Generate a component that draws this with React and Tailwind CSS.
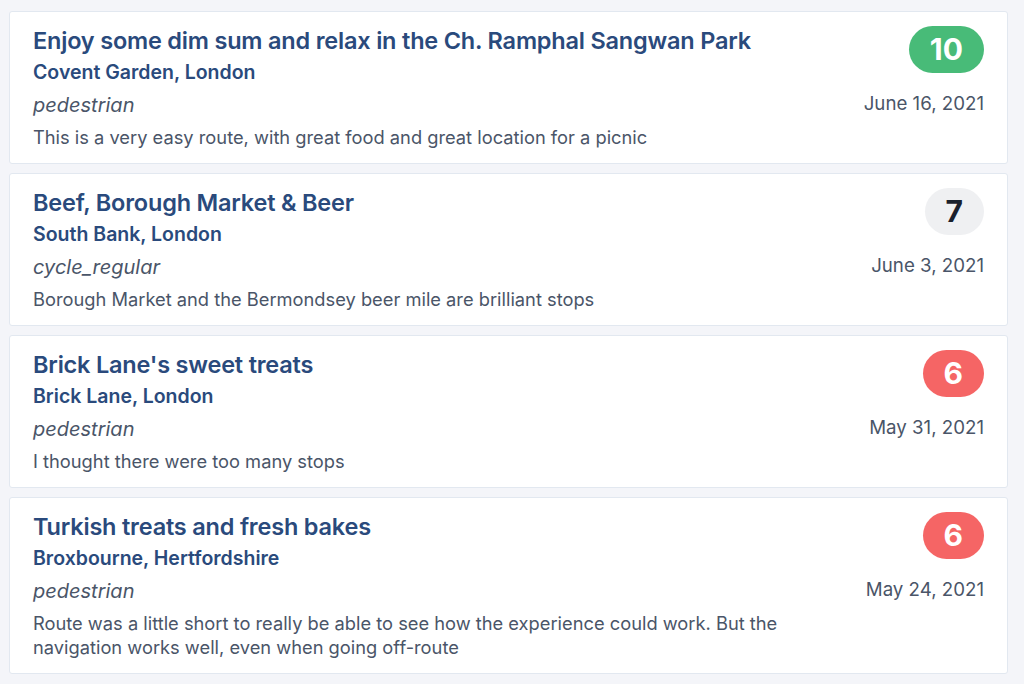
import React from "react";

const items = [
  {
    title: "Enjoy some dim sum and relax in the Ch. Ramphal Sangwan Park",
    place: "Covent Garden, London",
    mode: "pedestrian",
    desc: "This is a very easy route, with great food and great location for a picnic",
    score: 10,
    date: "June 16, 2021",
    badge: "bg-[#48bb78] text-white",
  },
  {
    title: "Beef, Borough Market & Beer",
    place: "South Bank, London",
    mode: "cycle_regular",
    desc: "Borough Market and the Bermondsey beer mile are brilliant stops",
    score: 7,
    date: "June 3, 2021",
    badge: "bg-[#eff0f2] text-[#1a202c]",
  },
  {
    title: "Brick Lane's sweet treats",
    place: "Brick Lane, London",
    mode: "pedestrian",
    desc: "I thought there were too many stops",
    score: 6,
    date: "May 31, 2021",
    badge: "bg-[#f56565] text-white",
  },
  {
    title: "Turkish treats and fresh bakes",
    place: "Broxbourne, Hertfordshire",
    mode: "pedestrian",
    desc: "Route was a little short to really be able to see how the experience could work. But the navigation works well, even when going off-route",
    score: 6,
    date: "May 24, 2021",
    badge: "bg-[#f56565] text-white",
  },
];

export default function App() {
  return (
    <div
      className="min-h-[684px] bg-[#f4f5f9] pt-[11px] pl-[9px] pr-[16px] pb-[9px] flex flex-col gap-[9px]"
      style={{ fontFamily: "Inter, 'Noto Sans', sans-serif" }}
    >
      {items.map((it, i) => (
        <div
          key={i}
          className="bg-white border border-[#e2e8f0] rounded-[3px] px-[23px] pt-[14px] pb-[14px] flex justify-between"
        >
          <div className="flex flex-col">
            <div className="text-[23.5px] leading-[30px] font-semibold text-[#2a4a7c] tracking-[-0.2px]">
              {it.title}
            </div>
            <div className="text-[19.5px] leading-[32px] font-semibold text-[#2a4a7c]">
              {it.place}
            </div>
            <div className="mt-[1px] text-[20px] leading-[32px] italic text-[#4a5568]">
              {it.mode}
            </div>
            <div className="mt-[4px] text-[18.3px] leading-[24px] text-[#4a5568] max-w-[770px]">
              {it.desc}
            </div>
          </div>
          <div className="flex flex-col items-end shrink-0">
            <div
              className={`h-[47px] px-[21px] rounded-full flex items-center justify-center text-[30px] font-bold ${it.badge}`}
            >
              {it.score}
            </div>
            <div className="mt-[19px] text-[18.7px] leading-[24px] text-[#4a5568]">
              {it.date}
            </div>
          </div>
        </div>
      ))}
    </div>
  );
}
